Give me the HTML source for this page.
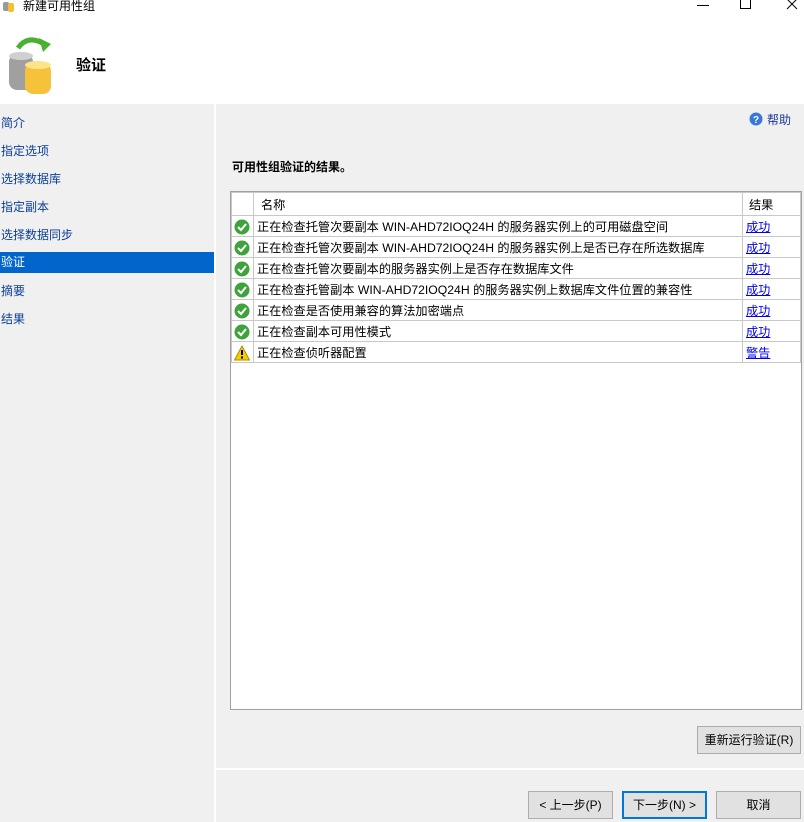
<!DOCTYPE html>
<html><head><meta charset="utf-8"><style>
*{margin:0;padding:0;box-sizing:border-box}
body{width:804px;height:822px;overflow:hidden;background:#f0f0f0;font-family:"Liberation Sans","Noto Sans CJK SC",sans-serif;font-size:12px;color:#000;position:relative}
.abs{position:absolute}
.nav{position:absolute;left:0;width:214px;height:21px;line-height:21px;color:#0a3e9a;font-size:12px;padding-left:1px;top:1px}
.sel{background:#0066cc;color:#fff}
table{border-collapse:collapse;position:absolute;left:231px;top:192px;width:570px;font-size:12.2px}
td{border:1px solid #c8c8c8;height:21px;padding:0 3px;white-space:nowrap}
tr.h td{height:23px}
td.i{width:22px;padding:0 0 0 3px;font-size:0}
td.r{width:58px}
a{color:#0000ee;text-decoration:underline}
.btn{position:absolute;height:28px;background:#e1e1e1;border:1px solid #adadad;text-align:center;line-height:26px;font-size:12px}
</style></head><body>
<div class="abs" style="left:0;top:0;width:804px;height:104px;background:#fff"></div>
<svg class="abs" style="left:2px;top:0" width="14" height="12"><rect x="1" y="2" width="6" height="9" fill="#999" rx="2"/><rect x="6" y="3" width="6" height="9" fill="#f5c030" rx="2"/></svg>
<div class="abs" style="left:23px;top:-3px;font-size:12px">新建可用性组</div>
<div class="abs" style="left:697px;top:5px;width:12px;height:1px;background:#000"></div>
<div class="abs" style="left:740px;top:-1px;width:11px;height:10px;border:1px solid #000;border-top:none"></div>
<svg class="abs" style="left:786px;top:0" width="12" height="10"><path d="M1 -1L11 9M11 -1L1 9" stroke="#000"/></svg>
<svg class="abs" style="left:6px;top:30px" width="50" height="66">
<path d="M12 18 Q22 4 38 14" stroke="#49b030" stroke-width="5" fill="none"/><path d="M33 8 L45 14 L37 22Z" fill="#49b030"/>
<rect x="3" y="24" width="24" height="36" rx="8" fill="#a0a0a0"/><ellipse cx="15" cy="26" rx="12" ry="4" fill="#d0d0d0"/>
<rect x="19" y="33" width="26" height="31" rx="8" fill="#f6c23a"/><ellipse cx="32" cy="35" rx="13" ry="4" fill="#fde48a"/></svg>
<div class="abs" style="left:76px;top:54px;font-size:15px;font-weight:bold">验证</div>
<div class="abs" style="left:214px;top:104px;width:2px;height:718px;background:#fff"></div>
<div class="nav" style="top:113px">简介</div>
<div class="nav" style="top:141px">指定选项</div>
<div class="nav" style="top:169px">选择数据库</div>
<div class="nav" style="top:197px">指定副本</div>
<div class="nav" style="top:225px">选择数据同步</div>
<div class="nav sel" style="top:252px">验证</div>
<div class="nav" style="top:281px">摘要</div>
<div class="nav" style="top:309px">结果</div>
<svg class="abs" style="left:749px;top:112px" width="14" height="14"><circle cx="7" cy="7" r="6.5" fill="#3a78d8"/><text x="7" y="11" font-size="10" fill="#fff" text-anchor="middle" font-weight="bold" font-family="Liberation Sans">?</text></svg>
<div class="abs" style="left:767px;top:111px;color:#1a3aa0">帮助</div>
<div class="abs" style="left:232px;top:158px;font-weight:bold">可用性组验证的结果。</div>
<div class="abs" style="left:230px;top:191px;width:572px;height:519px;background:#fff;border:1px solid #a0a0a0"></div>
<table>
<tr class="h"><td class="i"></td><td style="padding-left:7px">名称</td><td class="r" style="padding-left:6px">结果</td></tr>
<tr><td class="i">✔</td><td>正在检查托管次要副本 WIN-AHD72IOQ24H 的服务器实例上的可用磁盘空间</td><td class="r"><a>成功</a></td></tr>
<tr><td class="i">✔</td><td>正在检查托管次要副本 WIN-AHD72IOQ24H 的服务器实例上是否已存在所选数据库</td><td class="r"><a>成功</a></td></tr>
<tr><td class="i">✔</td><td>正在检查托管次要副本的服务器实例上是否存在数据库文件</td><td class="r"><a>成功</a></td></tr>
<tr><td class="i">✔</td><td>正在检查托管副本 WIN-AHD72IOQ24H 的服务器实例上数据库文件位置的兼容性</td><td class="r"><a>成功</a></td></tr>
<tr><td class="i">✔</td><td>正在检查是否使用兼容的算法加密端点</td><td class="r"><a>成功</a></td></tr>
<tr><td class="i">✔</td><td>正在检查副本可用性模式</td><td class="r"><a>成功</a></td></tr>
<tr><td class="i">!</td><td>正在检查侦听器配置</td><td class="r"><a>警告</a></td></tr>
</table>
<div class="btn" style="left:697px;top:726px;width:104px">重新运行验证(R)</div>
<div class="abs" style="left:216px;top:768px;width:588px;height:2px;background:#fff"></div>
<div class="btn" style="left:528px;top:791px;width:85px">&lt; 上一步(P)</div>
<div class="btn" style="left:622px;top:791px;width:85px;border:2px solid #0078d7;line-height:24px">下一步(N) &gt;</div>
<div class="btn" style="left:716px;top:791px;width:85px">取消</div>
<svg class="abs" style="left:234px;top:219px" width="16" height="150">
<g fill="#3ea33a"><circle cx="8" cy="8" r="7.5"/><circle cx="8" cy="29" r="7.5"/><circle cx="8" cy="50" r="7.5"/><circle cx="8" cy="71" r="7.5"/><circle cx="8" cy="92" r="7.5"/><circle cx="8" cy="113" r="7.5"/></g>
<g stroke="#fff" stroke-width="2" fill="none"><path d="M4 8l3 3 5-6"/><path d="M4 29l3 3 5-6"/><path d="M4 50l3 3 5-6"/><path d="M4 71l3 3 5-6"/><path d="M4 92l3 3 5-6"/><path d="M4 113l3 3 5-6"/></g>
<path d="M8 127L15.5 141H0.5Z" fill="#f5d000" stroke="#b08a00"/><rect x="7" y="131" width="2" height="5"/><rect x="7" y="137.5" width="2" height="2"/>
</svg>
</body></html>
